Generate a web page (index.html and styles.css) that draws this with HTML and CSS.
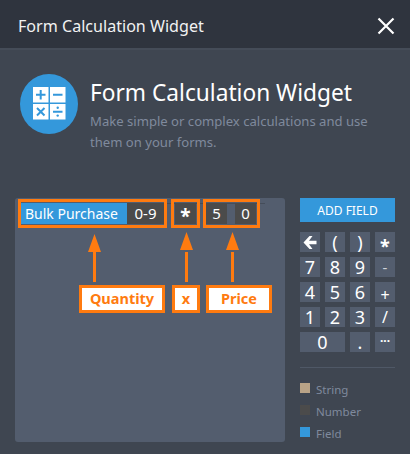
FILE: index.html
```html
<!DOCTYPE html>
<html lang="en">
<head>
<meta charset="utf-8">
<title>Form Calculation Widget</title>
<link rel="stylesheet" href="styles.css">
</head>
<body>
<div class="modal">
  <header class="topbar">
    <span class="topbar-title">Form Calculation Widget</span>
    <svg class="close" width="18" height="18" viewBox="0 0 18 18"><path d="M1.500 1.500 16.500 16.500M16.500 1.500 1.500 16.500" stroke="#fff" stroke-width="2.200" fill="none"/></svg>
  </header>
  <section class="intro">
    <svg class="logo" width="58" height="60" viewBox="0 0 58 60">
      <ellipse cx="29" cy="30" rx="29" ry="30" fill="#3498db"/>
      <path d="M13 13h15.500v15.500H13zM30 13h15.500v15.500H30zM13 30h15.500v15.500H13zM30 30h15.500v15.500H30z" fill="#fff"/>
      <path d="M16 20.700h9.500M20.700 16v9.500M33 20.700h9.500M17 34l7.500 7.500M24.500 34 17 41.500M33 37.700h9.500" stroke="#3498db" stroke-width="2" fill="none"/>
      <circle cx="37.700" cy="33.800" r="1.200" fill="#3498db"/><circle cx="37.700" cy="41.600" r="1.200" fill="#3498db"/>
    </svg>
    <div class="intro-text">
      <h1>Form Calculation Widget</h1>
      <p>Make simple or complex calculations and use them on your forms.</p>
    </div>
  </section>
  <main class="work">
    <div class="panel">
      <div class="formula">
        <span class="token token-field">Bulk Purchase</span><span class="token token-num token-range">0-9</span>
        <span class="token token-num token-op">*</span>
        <span class="token token-num token-digit">5</span><span class="token token-num token-digit token-second">0</span>
      </div>
      <div class="outline outline-qty"></div>
      <div class="outline outline-op"></div>
      <div class="outline outline-price"></div>
      <svg class="arrows" width="270" height="60" viewBox="0 0 270 60">
        <path d="M79.500 62V30M171.500 62V30M217.500 62V30" stroke="#ff7b10" stroke-width="3" fill="none"/>
        <path d="M79.500 12 73 30h13zM171.500 10 165 28h13zM217.500 10 211 28h13z" fill="#ff7b10"/>
      </svg>
      <span class="callout callout-qty">Quantity</span>
      <span class="callout callout-op">x</span>
      <span class="callout callout-price">Price</span>
    </div>
    <aside class="tools">
      <button class="add">ADD FIELD</button>
      <div class="keys">
        <span class="key key-back"><svg width="14" height="13" viewBox="0 0 14 13"><path d="M6.500 0 0.500 6.500l6 6.500h3L6 8.200H13.500V4.800H6L9.500 0z" fill="#fff"/></svg></span>
        <span class="key">(</span><span class="key">)</span><span class="key key-sym">*</span>
        <span class="key">7</span><span class="key">8</span><span class="key">9</span><span class="key key-dim">-</span>
        <span class="key">4</span><span class="key">5</span><span class="key">6</span><span class="key key-low">+</span>
        <span class="key">1</span><span class="key">2</span><span class="key">3</span><span class="key key-slash">/</span>
        <span class="key key-wide">0</span><span class="key">.</span><span class="key key-more">...</span>
      </div>
      <ul class="legend">
        <li><i class="swatch swatch-string"></i>String</li>
        <li><i class="swatch swatch-number"></i>Number</li>
        <li><i class="swatch swatch-field"></i>Field</li>
      </ul>
    </aside>
  </main>
</div>
</body>
</html>
```
FILE: styles.css
```css
* { box-sizing: border-box; }
html, body { margin: 0; padding: 0; }
body {
  width: 410px;
  height: 454px;
  overflow: hidden;
  background: #3f4651;
  font-family: "Noto Sans", "Open Sans", sans-serif;
  color: #fff;
}
.modal { height: 454px; display: flex; flex-direction: column; }
.topbar {
  height: 50px;
  flex: none;
  background: #2f343e;
  border-bottom: 2px solid #454c58;
  display: flex;
  align-items: center;
  justify-content: space-between;
  padding: 3px 15px 0 18px;
}
.topbar-title { font-size: 16.100px; color: #f2f2f2; }
.intro {
  height: 148px;
  flex: none;
  display: flex;
  padding: 24px 0 0 20px;
  gap: 12px;
  align-items: flex-start;
}
.logo { flex: none; }
.intro-text { padding-top: 3px; }
.intro-text h1 {
  margin: 0;
  font-size: 22.700px;
  font-weight: 400;
  line-height: 31px;
  white-space: nowrap;
}
.intro-text p {
  margin: 3px 0 0;
  width: 300px;
  font-size: 13.100px;
  line-height: 21px;
  color: #7f8a9d;
}
.work {
  flex: 1;
  display: flex;
  padding: 0 15px 17px 15px;
  gap: 15px;
  align-items: stretch;
}
.panel {
  position: relative;
  width: 270px;
  flex: none;
  background: #535d6e;
  border-radius: 3px;
  padding: 5px 6px;
}
.formula { display: flex; align-items: flex-start; border-top: 1px solid #454d5a; margin-right: 14px; height: 25px; }
.token {
  height: 21px;
  margin-top: -1px;
  line-height: 21px;
  font-size: 14px;
  text-align: center;
  color: #fff;
}
.token-field { width: 106px; background: #3498db; text-align: left; padding-left: 4px; }
.token-num { background: #4b4b4b; }
.token-range { width: 37px; font-size: 15px; }
.token-op { width: 21px; margin-left: 11px; font-weight: 700; font-size: 19px; line-height: 27px; }
.token-digit { width: 21px; font-size: 15px; }
.token-op + .token-digit { margin-left: 10px; }
.token-second { margin-left: 8px; }
.outline { position: absolute; top: 1px; height: 29px; border: 3px solid #ff7b10; }
.outline-qty { left: 3px; width: 149px; }
.outline-op { left: 156px; width: 29px; }
.outline-price { left: 188px; width: 57px; }
.arrows { position: absolute; left: 0; top: 24px; }
.callout {
  position: absolute;
  top: 87px;
  height: 28px;
  line-height: 21px;
  border: 3px solid #ff7b10;
  background: #fff;
  color: #ff7b10;
  font-size: 14.500px;
  font-weight: 700;
  text-align: center;
}
.callout-qty { left: 64px; width: 86px; }
.callout-op { left: 157px; width: 28px; }
.callout-price { left: 191px; width: 66px; }
.tools { flex: none; width: 95px; }
.add {
  display: block;
  width: 95px;
  height: 24px;
  border: 0;
  background: #3498db;
  color: #fff;
  font: 400 12px "Noto Sans", "Open Sans", sans-serif;
  padding: 0;
}
.keys {
  margin-top: 10px;
  display: grid;
  grid-template-columns: repeat(4, 20px);
  grid-auto-rows: 20px;
  gap: 5px;
  padding-bottom: 15px;
  border-bottom: 1px solid #4f5866;
}
.key {
  background: #535d6e;
  display: flex;
  align-items: center;
  justify-content: center;
  font-size: 18px;
  line-height: 20px;
  color: #fff;
}
.key-wide { grid-column: span 2; }
.key-sym { font-size: 18px; font-weight: 700; padding-top: 2px; }
.key-sym, .key-low { line-height: 24px; align-items: flex-start; }
.key-dim { color: #cfd3da; font-size: 15px; }
.key-low { font-size: 16px; padding-top: 1px; }
.key-slash { font-size: 16px; }
.key-more { font-weight: 700; font-size: 12px; line-height: 12px; align-items: flex-start; }
.legend {
  list-style: none;
  margin: 12px 0 0;
  padding: 0;
  display: flex;
  flex-direction: column;
  gap: 4px;
}
.legend li {
  height: 18px;
  display: flex;
  align-items: center;
  gap: 6px;
  font-size: 11.500px;
  color: #7f8a9d;
}
.swatch { width: 10px; height: 10px; flex: none; margin-top: -2px; }
.swatch-string { background: #b9a387; }
.swatch-number { background: #4b4b4b; }
.swatch-field { background: #3498db; }
```
